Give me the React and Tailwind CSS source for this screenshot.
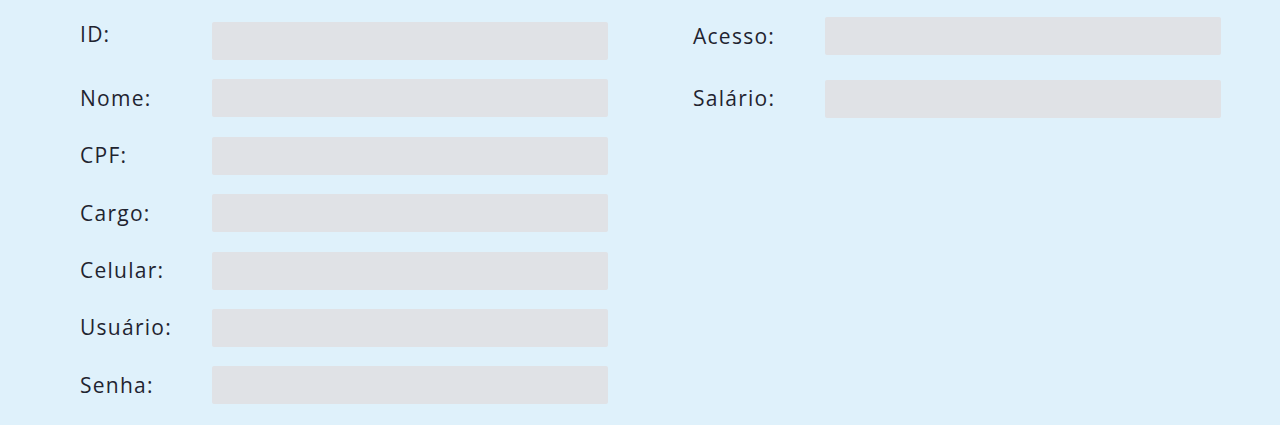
const left = ["ID:", "Nome:", "CPF:", "Cargo:", "Celular:", "Usuário:", "Senha:"];
const right = ["Acesso:", "Salário:"];

function Field({ label, first }) {
  return (
    <div className={`flex h-[38px] ${first ? "items-start" : "items-center"}`}>
      <label className={`w-[132px] shrink-0 ${first ? "-mt-[2px]" : "-mt-[1px]"}`}>{label}</label>
      <input type="text" className="h-[38px] w-[396px] rounded-[2px] bg-[#e0e2e6] outline-none" />
    </div>
  );
}

export default function App() {
  return (
    <div
      className="min-h-screen bg-[#dff1fb] text-[21px] leading-7 tracking-[0.06em] text-[#1f2430]"
      style={{ fontFamily: '"Open Sans", sans-serif' }}
    >
      <form className="flex gap-[85px] pl-[80px]">
        <div className="flex flex-col gap-[19.4px] pt-[22px]">
          {left.map((l, i) => (
            <Field key={l} label={l} first={i === 0} />
          ))}
        </div>
        <div className="flex flex-col gap-[24.6px] pt-[17.3px]">
          {right.map((l) => (
            <Field key={l} label={l} />
          ))}
        </div>
      </form>
    </div>
  );
}
